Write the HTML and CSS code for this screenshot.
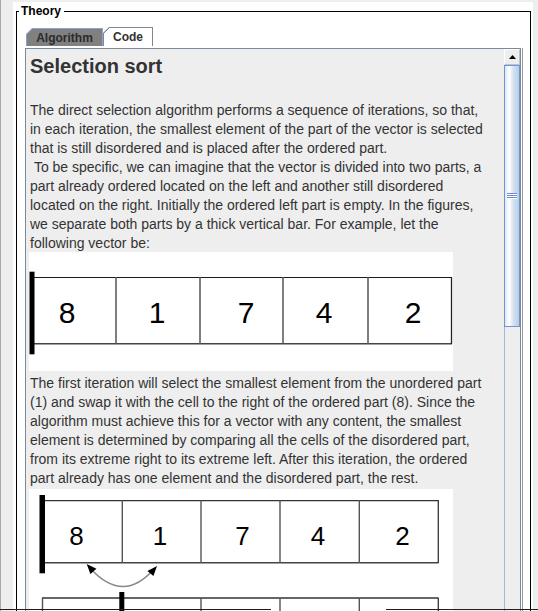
FILE: index.html
```html
<!DOCTYPE html>
<html>
<head>
<meta charset="utf-8">
<link rel="stylesheet" href="styles.css">
</head>
<body>
<div class="window">
  <div class="panel">
    <fieldset class="group">
      <legend class="group-title">Theory</legend>
      <div class="tabpane">
        <div class="tabrow">
          <div class="tab tab-algorithm">Algorithm</div>
          <div class="tab tab-code">Code</div>
        </div>
        <div class="tabbody">
          <div class="doc">
            <h1 class="doc-title">Selection sort</h1>
            <p class="doc-text">The direct selection algorithm performs a sequence of iterations, so that,<br>in each iteration, the smallest element of the part of the vector is selected<br>that is still disordered and is placed after the ordered part.<br>&nbsp;To be specific, we can imagine that the vector is divided into two parts, a<br>part already ordered located on the left and another still disordered<br>located on the right. Initially the ordered left part is empty. In the figures,<br>we separate both parts by a thick vertical bar. For example, let the<br>following vector be:</p>
            <svg class="fig fig-1" width="424" height="119" viewBox="0 0 424 119">
              <rect x="0" y="0" width="424" height="119" fill="#fff"/>
              <line x1="5" y1="25.5" x2="423" y2="25.5" stroke="#1a1a1a" stroke-width="1.2"/>
              <line x1="5" y1="91.7" x2="423" y2="91.7" stroke="#444" stroke-width="1.5"/>
              <line x1="87" y1="25" x2="87" y2="92" stroke="#555" stroke-width="1.5"/>
              <line x1="171" y1="25" x2="171" y2="92" stroke="#555" stroke-width="1.5"/>
              <line x1="254" y1="25" x2="254" y2="92" stroke="#555" stroke-width="1.5"/>
              <line x1="339" y1="25" x2="339" y2="92" stroke="#555" stroke-width="1.5"/>
              <line x1="422.5" y1="25" x2="422.5" y2="92" stroke="#222" stroke-width="1.3"/>
              <rect x="0.5" y="19.7" width="5" height="82.6" fill="#000"/>
              <g class="fig-num" font-size="30" text-anchor="middle" fill="#000">
                <text x="38" y="71.3">8</text>
                <text x="128" y="71.3">1</text>
                <text x="217" y="71.3">7</text>
                <text x="295" y="71.3">4</text>
                <text x="384" y="71.3">2</text>
              </g>
            </svg>
            <p class="doc-text doc-text-2">The first iteration will select the smallest element from the unordered part<br>(1) and swap it with the cell to the right of the ordered part (8). Since the<br>algorithm must achieve this for a vector with any content, the smallest<br>element is determined by comparing all the cells of the disordered part,<br>from its extreme right to its extreme left. After this iteration, the ordered<br>part already has one element and the disordered part, the rest.</p>
            <svg class="fig fig-2" width="424" height="130" viewBox="0 0 424 130">
              <rect x="0" y="0" width="424" height="130" fill="#fff"/>
              <line x1="16" y1="11.7" x2="409.5" y2="11.7" stroke="#333" stroke-width="1.3"/>
              <line x1="16" y1="73.7" x2="409.5" y2="73.7" stroke="#444" stroke-width="1.4"/>
              <line x1="93.3" y1="11" x2="93.3" y2="74" stroke="#555" stroke-width="1.4"/>
              <line x1="172" y1="11" x2="172" y2="74" stroke="#555" stroke-width="1.4"/>
              <line x1="251" y1="11" x2="251" y2="74" stroke="#555" stroke-width="1.4"/>
              <line x1="330.3" y1="11" x2="330.3" y2="74" stroke="#555" stroke-width="1.4"/>
              <line x1="409.3" y1="11" x2="409.3" y2="74" stroke="#333" stroke-width="1.3"/>
              <rect x="10.5" y="6" width="5.5" height="78.3" fill="#000"/>
              <g class="fig-num" font-size="26" text-anchor="middle" fill="#000">
                <text x="47.5" y="56">8</text>
                <text x="131" y="56">1</text>
                <text x="213.5" y="56">7</text>
                <text x="289" y="56">4</text>
                <text x="373.5" y="56">2</text>
              </g>
              <path d="M 61 79 Q 94 115.5 125 80" fill="none" stroke="#888" stroke-width="1.5"/>
              <polygon points="57.7,75 67.4,79.7 61.4,85.1" fill="#000"/>
              <polygon points="128,77 124.4,87.1 118.4,81.9" fill="#000"/>
              <line x1="13" y1="109" x2="409.5" y2="109" stroke="#333" stroke-width="1.3"/>
              <line x1="13.5" y1="109" x2="13.5" y2="130" stroke="#555" stroke-width="1.4"/>
              <line x1="172" y1="109" x2="172" y2="130" stroke="#555" stroke-width="1.4"/>
              <line x1="251" y1="109" x2="251" y2="130" stroke="#555" stroke-width="1.4"/>
              <line x1="330.3" y1="109" x2="330.3" y2="130" stroke="#555" stroke-width="1.4"/>
              <line x1="409.3" y1="109" x2="409.3" y2="130" stroke="#333" stroke-width="1.3"/>
              <rect x="90.3" y="103" width="5" height="27" fill="#000"/>
            </svg>
          </div>
          <div class="scrollbar">
            <div class="sb-up">
              <svg width="7" height="4" viewBox="0 0 7 4"><polygon points="3.5,0 7,4 0,4" fill="#000"/></svg>
            </div>
            <div class="sb-thumb"><span class="sb-grip"></span></div>
            <div class="sb-track"></div>
          </div>
        </div>
      </div>
    </fieldset>
  </div>
  <div class="edge-line"></div>
</div>
</body>
</html>
```

FILE: styles.css
```css
* {
  box-sizing: border-box;
}

html,
body {
  margin: 0;
  padding: 0;
}

body {
  width: 538px;
  height: 611px;
  overflow: hidden;
  background: #eeeeee;
  font-family: "Liberation Sans", Arial, sans-serif;
}

.window {
  position: relative;
  height: 611px;
  border-left: 1px solid #a9a9a9;
  padding: 2px 5px 0 12px;
}

.panel {
  height: 609px;
  overflow: hidden;
  background: #ffffff;
  padding: 2px 2px 0 3px;
}

.group {
  margin: 0;
  padding: 0;
  min-width: 0;
  height: 720px;
  border: 1px solid #000000;
}

.group-title {
  margin-left: 2px;
  padding: 0 3px 0 2px;
  font-family: "Liberation Sans", Arial, sans-serif;
  font-weight: bold;
  font-size: 12px;
  line-height: 14px;
  color: #000000;
}

.tabpane {
  margin: 9px 9px 0 8px;
}

.tabrow {
  display: flex;
  align-items: flex-end;
  height: 19px;
  margin-bottom: 2px;
}

.tab {
  display: flex;
  align-items: center;
  justify-content: center;
  font-family: "Liberation Sans", Arial, sans-serif;
  font-weight: bold;
  font-size: 12px;
  color: #333333;
  border-bottom: none;
  background-origin: border-box;
  clip-path: polygon(6px 0, 100% 0, 100% 100%, 0 100%, 0 6px);
}

.tab-algorithm {
  width: 77px;
  height: 18px;
  margin-left: 1px;
  border: 1px solid #8fa2cf;
  border-bottom: none;
  background: linear-gradient(135deg, #8fa2cf 0 5.3px, #808080 5.3px);
  background-origin: border-box;
  color: #2b2b2b;
}

.tab-code {
  width: 50px;
  height: 19px;
  border: 1px solid #7a8a99;
  border-bottom: none;
  background: linear-gradient(135deg, #7a8a99 0 5.3px, #ffffff 5.3px);
  background-origin: border-box;
}

.tabbody {
  display: flex;
  height: 620px;
  background: #eeeeee;
  border: 1px solid #7a8a99;
  border-bottom: none;
  box-shadow: 1px 0 0 #ffffff, 2px 0 0 #9a9a9a;
}

.doc {
  flex: 1;
  min-width: 0;
  overflow: hidden;
  padding: 6px 0 0 3px;
  color: #333333;
}

.doc-title {
  margin: 0;
  padding-left: 1px;
  font-family: "Liberation Sans", Arial, sans-serif;
  font-weight: bold;
  font-size: 20px;
  line-height: 23px;
}

.doc-text {
  margin: 22px 0 0;
  padding: 1px 0 0 1px;
  font-family: "Liberation Sans", Arial, sans-serif;
  font-size: 14px;
  line-height: 19px;
  white-space: nowrap;
}

.doc-text-2 {
  margin-top: 2px;
}

.fig {
  display: block;
}

.fig-1 {
  margin-top: -1px;
}

.fig-2 {
  margin-top: 1px;
}

.fig-num {
  font-family: "Liberation Sans", Arial, sans-serif;
}

.scrollbar {
  width: 16px;
  display: flex;
  flex-direction: column;
}

.sb-up {
  height: 16px;
  display: flex;
  align-items: center;
  justify-content: center;
  background: #eeeeee;
  border: 1px solid #b9c4cf;
  border-top-color: #ffffff;
  border-left-color: #ffffff;
}

.sb-up svg {
  display: block;
  margin-top: -1px;
}

.sb-thumb {
  height: 262px;
  display: flex;
  align-items: center;
  justify-content: center;
  border: 1px solid #7094d4;
  background: linear-gradient(to right, #dce7f3 0, #ffffff 30%, #d5e2f0 60%, #b9cfe6 100%);
}

.sb-grip {
  display: block;
  width: 10px;
  height: 6px;
  background: repeating-linear-gradient(to bottom, #6e8fcb 0 1px, #ffffff 1px 2px);
}

.sb-track {
  flex: 1;
  background: #eeeeee;
  border-left: 1px solid #a3b7d6;
}

.edge-line {
  position: absolute;
  left: -1px;
  right: 0;
  top: 609px;
  height: 1px;
  background: linear-gradient(to right, #1e1e1e 0 271px, transparent 271px 386px, #1e1e1e 386px);
}
```
